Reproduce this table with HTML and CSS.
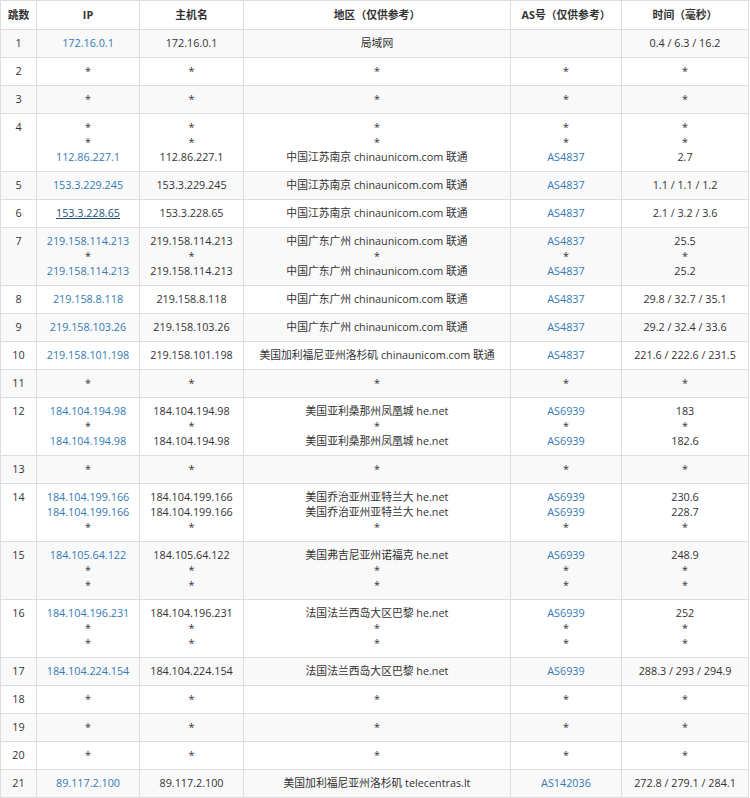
FILE: index.html
```html
<!DOCTYPE html>
<html lang="zh-CN">
<head>
<meta charset="utf-8">
<title>路由追踪</title>
<link rel="stylesheet" href="styles.css">
</head>
<body>
<table class="trace">
<colgroup>
<col class="c-hop"><col class="c-ip"><col class="c-host"><col class="c-geo"><col class="c-as"><col class="c-time">
</colgroup>
<thead>
<tr><th>跳数</th><th>IP</th><th>主机名</th><th>地区（仅供参考）</th><th>AS号（仅供参考）</th><th>时间（毫秒）</th></tr>
</thead>
<tbody>
<tr><td>1</td><td><a href="#">172.16.0.1</a></td><td>172.16.0.1</td><td>局域网</td><td></td><td>0.4 / 6.3 / 16.2</td></tr>
<tr><td>2</td><td>*</td><td>*</td><td>*</td><td>*</td><td>*</td></tr>
<tr><td>3</td><td>*</td><td>*</td><td>*</td><td>*</td><td>*</td></tr>
<tr><td>4</td><td>*<br>*<br><a href="#">112.86.227.1</a></td><td>*<br>*<br>112.86.227.1</td><td>*<br>*<br>中国江苏南京 chinaunicom.com 联通</td><td>*<br>*<br><a href="#">AS4837</a></td><td>*<br>*<br>2.7</td></tr>
<tr><td>5</td><td><a href="#">153.3.229.245</a></td><td>153.3.229.245</td><td>中国江苏南京 chinaunicom.com 联通</td><td><a href="#">AS4837</a></td><td>1.1 / 1.1 / 1.2</td></tr>
<tr><td>6</td><td><a href="#" class="hover">153.3.228.65</a></td><td>153.3.228.65</td><td>中国江苏南京 chinaunicom.com 联通</td><td><a href="#">AS4837</a></td><td>2.1 / 3.2 / 3.6</td></tr>
<tr><td>7</td><td><a href="#">219.158.114.213</a><br>*<br><a href="#">219.158.114.213</a></td><td>219.158.114.213<br>*<br>219.158.114.213</td><td>中国广东广州 chinaunicom.com 联通<br>*<br>中国广东广州 chinaunicom.com 联通</td><td><a href="#">AS4837</a><br>*<br><a href="#">AS4837</a></td><td>25.5<br>*<br>25.2</td></tr>
<tr><td>8</td><td><a href="#">219.158.8.118</a></td><td>219.158.8.118</td><td>中国广东广州 chinaunicom.com 联通</td><td><a href="#">AS4837</a></td><td>29.8 / 32.7 / 35.1</td></tr>
<tr><td>9</td><td><a href="#">219.158.103.26</a></td><td>219.158.103.26</td><td>中国广东广州 chinaunicom.com 联通</td><td><a href="#">AS4837</a></td><td>29.2 / 32.4 / 33.6</td></tr>
<tr><td>10</td><td><a href="#">219.158.101.198</a></td><td>219.158.101.198</td><td>美国加利福尼亚州洛杉矶 chinaunicom.com 联通</td><td><a href="#">AS4837</a></td><td>221.6 / 222.6 / 231.5</td></tr>
<tr><td>11</td><td>*</td><td>*</td><td>*</td><td>*</td><td>*</td></tr>
<tr><td>12</td><td><a href="#">184.104.194.98</a><br>*<br><a href="#">184.104.194.98</a></td><td>184.104.194.98<br>*<br>184.104.194.98</td><td>美国亚利桑那州凤凰城 he.net<br>*<br>美国亚利桑那州凤凰城 he.net</td><td><a href="#">AS6939</a><br>*<br><a href="#">AS6939</a></td><td>183<br>*<br>182.6</td></tr>
<tr><td>13</td><td>*</td><td>*</td><td>*</td><td>*</td><td>*</td></tr>
<tr><td>14</td><td><a href="#">184.104.199.166</a><br><a href="#">184.104.199.166</a><br>*</td><td>184.104.199.166<br>184.104.199.166<br>*</td><td>美国乔治亚州亚特兰大 he.net<br>美国乔治亚州亚特兰大 he.net<br>*</td><td><a href="#">AS6939</a><br><a href="#">AS6939</a><br>*</td><td>230.6<br>228.7<br>*</td></tr>
<tr><td>15</td><td><a href="#">184.105.64.122</a><br>*<br>*</td><td>184.105.64.122<br>*<br>*</td><td>美国弗吉尼亚州诺福克 he.net<br>*<br>*</td><td><a href="#">AS6939</a><br>*<br>*</td><td>248.9<br>*<br>*</td></tr>
<tr><td>16</td><td><a href="#">184.104.196.231</a><br>*<br>*</td><td>184.104.196.231<br>*<br>*</td><td>法国法兰西岛大区巴黎 he.net<br>*<br>*</td><td><a href="#">AS6939</a><br>*<br>*</td><td>252<br>*<br>*</td></tr>
<tr><td>17</td><td><a href="#">184.104.224.154</a></td><td>184.104.224.154</td><td>法国法兰西岛大区巴黎 he.net</td><td><a href="#">AS6939</a></td><td>288.3 / 293 / 294.9</td></tr>
<tr><td>18</td><td>*</td><td>*</td><td>*</td><td>*</td><td>*</td></tr>
<tr><td>19</td><td>*</td><td>*</td><td>*</td><td>*</td><td>*</td></tr>
<tr><td>20</td><td>*</td><td>*</td><td>*</td><td>*</td><td>*</td></tr>
<tr><td>21</td><td><a href="#">89.117.2.100</a></td><td>89.117.2.100</td><td>美国加利福尼亚州洛杉矶 telecentras.lt</td><td><a href="#">AS142036</a></td><td>272.8 / 279.1 / 284.1</td></tr>
</tbody>
</table>
</body>
</html>
```
FILE: styles.css
```css
html, body {
  margin: 0;
  padding: 0;
  background: #fff;
}
body {
  font-family: "Open Sans", "Noto Sans CJK SC", sans-serif;
  font-size: 10.8px;
  color: #333;
}
.trace {
  table-layout: fixed;
  border-collapse: separate;
  border-spacing: 0;
  width: 749px;
  border-top: 1px solid #ddd;
  border-left: 1px solid #ddd;
}
.c-hop { width: 36px; }
.c-ip { width: 103px; }
.c-host { width: 104px; }
.c-geo { width: 267px; }
.c-as { width: 111px; }
.c-time { width: 127px; }
.trace th,
.trace td {
  border-right: 1px solid #ddd;
  border-bottom: 1px solid #ddd;
  text-align: center;
  vertical-align: top;
  padding: 5px 3px 7px;
  line-height: 15px;
  white-space: nowrap;
  overflow: hidden;
}
.trace th {
  font-weight: bold;
  padding-top: 6px;
  padding-bottom: 7px;
}
.trace tbody tr:nth-child(odd) td {
  background: #f9f9f9;
}
.trace a {
  color: #337ab7;
  text-decoration: none;
}
.trace a.hover {
  color: #23527c;
  text-decoration: underline;
}
```
